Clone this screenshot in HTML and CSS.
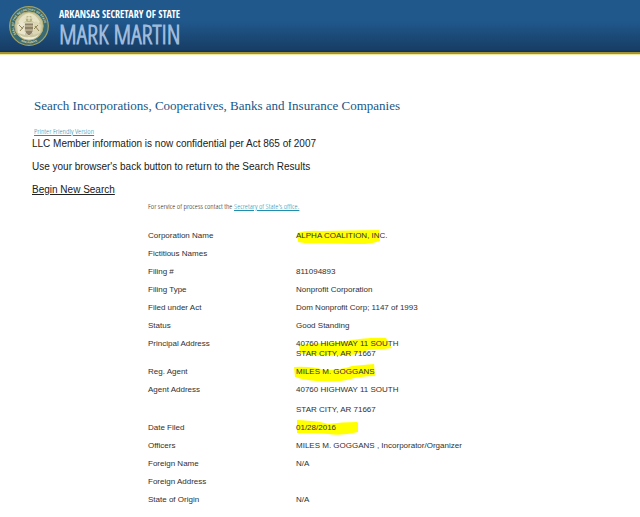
FILE: index.html
```html
<!DOCTYPE html>
<html lang="en">
<head>
<meta charset="utf-8">
<meta name="viewport" content="width=device-width, initial-scale=1">
<title>Arkansas Secretary of State</title>
<link rel="stylesheet" href="styles.css">
</head>
<body>
<header class="banner">
  <svg class="seal" viewBox="0 0 40 40" aria-hidden="true">
    <defs>
      <path id="ring-top" d="M7.3 28.5A15.3 15.3 0 1 1 32.7 28.5"/>
      <path id="ring-bottom" d="M8 32.6A17.4 17.4 0 0 0 32 32.6"/>
    </defs>
    <circle cx="20" cy="20" r="19.3" fill="#3b6b72" stroke="#a3a263" stroke-width="1.2"/>
    <circle cx="20" cy="20" r="14.2" fill="#c9c6a0" stroke="#b5ae72"/>
    <path d="M9 16Q13 8 20 7Q27 8 31 16L28 18L20 13L12 18Z" fill="#e6e2c4"/>
    <path d="M8 19L13 15L16 18V29L9 27Z" fill="#e9e5cf"/>
    <path d="M32 19L27 15L24 18V29L31 27Z" fill="#dcd6b4"/>
    <path d="M10 19L14 23M11 25L15 20M29 19L25 23M30 25L26 20" stroke="#8f8455" stroke-width="1" fill="none"/>
    <circle cx="20" cy="13" r="3.2" fill="#b7b27f"/>
    <path d="M20 9V15M17 12H23" stroke="#f1eed8" stroke-width="1"/>
    <path d="M15.5 17H24.5V24Q24 28 20 30Q16 28 15.5 24Z" fill="#8d8068" stroke="#eee9cf" stroke-width=".8"/>
    <path d="M16 20H24M16 24H24" stroke="#d9cfa6" stroke-width="1"/>
    <path d="M10 28Q14 32 20 31Q26 32 30 28L28 31Q20 36 12 31Z" fill="#efebd7"/>
    <text class="seal-text"><textPath href="#ring-top">SEAL OF THE SECRETARY OF STATE</textPath></text>
    <text class="seal-text"><textPath href="#ring-bottom" startOffset="50%" text-anchor="middle">ARKANSAS</textPath></text>
  </svg>
  <div class="brand">
    <span class="office">ARKANSAS SECRETARY OF STATE</span>
    <span class="holder">MARK MARTIN</span>
  </div>
</header>
<main class="page">
  <h1 class="title">Search Incorporations, Cooperatives, Banks and Insurance Companies</h1>
  <a class="fine-link printer" href="#">Printer Friendly Version</a>
  <div class="notes">
    <p>LLC Member information is now confidential per Act 865 of 2007</p>
    <p>Use your browser's back button to return to the Search Results</p>
    <p><a class="new-search" href="#">Begin New Search</a></p>
  </div>
  <section class="record">
    <p class="service">For service of process contact the <a class="fine-link" href="#">Secretary of State's office.</a></p>
    <table class="details">
      <tbody>
        <tr><th scope="row">Corporation Name</th><td><svg class="marker" viewBox="0 0 110 24" aria-hidden="true"><path d="M5 6Q15 3 28 4L87 3L88 14Q82 16 74 17Q45 17 28 16Q15 17 6 15Z"/></svg>ALPHA COALITION, INC.</td></tr>
        <tr><th scope="row">Fictitious Names</th><td></td></tr>
        <tr><th scope="row">Filing #</th><td>811094893</td></tr>
        <tr><th scope="row">Filing Type</th><td>Nonprofit Corporation</td></tr>
        <tr><th scope="row">Filed under Act</th><td>Dom Nonprofit Corp; 1147 of 1993</td></tr>
        <tr><th scope="row">Status</th><td>Good Standing</td></tr>
        <tr><th scope="row">Principal Address</th><td><svg class="marker" viewBox="0 0 110 24" aria-hidden="true"><path d="M7 10Q25 8 50 7Q75 2 94 3L100 13Q88 15 76 15Q68 19 58 20H20L8 18Z"/></svg>40760 HIGHWAY 11 SOUTH<br>STAR CITY, AR 71667</td></tr>
        <tr><th scope="row">Reg. Agent</th><td><svg class="marker" viewBox="0 0 110 24" aria-hidden="true"><path d="M2 4Q20 3 32 7Q50 7 60 3L82 1L83 13Q68 13 55 17Q42 20 25 18Q12 17 3 14Z"/></svg>MILES M. GOGGANS</td></tr>
        <tr><th scope="row">Agent Address</th><td>40760 HIGHWAY 11 SOUTH<br><br>STAR CITY, AR 71667</td></tr>
        <tr><th scope="row">Date Filed</th><td><svg class="marker" viewBox="0 0 110 24" aria-hidden="true"><path d="M5 1Q28 2 36 5Q50 3 65 3L66 4V13Q50 17 36 15Q24 14 5 14Z"/></svg>01/28/2016</td></tr>
        <tr><th scope="row">Officers</th><td>MILES M. GOGGANS , Incorporator/Organizer</td></tr>
        <tr><th scope="row">Foreign Name</th><td>N/A</td></tr>
        <tr><th scope="row">Foreign Address</th><td></td></tr>
        <tr><th scope="row">State of Origin</th><td>N/A</td></tr>
      </tbody>
    </table>
  </section>
</main>
</body>
</html>
```
FILE: styles.css
```css
body {
  margin: 0;
  background: #fff;
  color: #303030;
  font-family: "Liberation Sans", Arial, sans-serif;
}

.banner {
  display: flex;
  align-items: center;
  gap: 10px;
  padding: 6px 9px;
  background: linear-gradient(#20588c 0, #20588c 40%, #173d65 96%, #0d3155 100%);
  border-bottom: 2px solid #a4922f;
  box-shadow: 0 1px #efe8a0;
}

.seal {
  width: 40px;
  height: 40px;
}

.seal-text {
  fill: #d9dcae;
  font-size: 3px;
  font-weight: bold;
}

.brand {
  display: flex;
  flex-direction: column;
  white-space: nowrap;
}

.office {
  color: #fff;
  font: bold 10px/16px "Open Sans Condensed", "Roboto Condensed", sans-serif;
}

.holder {
  color: #9fbbdc;
  font: bold 26px/24px "Open Sans Condensed Light", "Roboto Condensed", sans-serif;
}

.page {
  padding: 44px 32px 8px;
}

.title {
  margin: 0 0 11px 2px;
  color: #165789;
  font: 13px/16px "Liberation Serif", "Times New Roman", serif;
}

.fine-link {
  color: #1f8fb0;
}

.printer,
.service {
  font: 300 8px/12px "Open Sans Condensed Light", "Roboto Condensed", sans-serif;
}

.printer {
  display: block;
  margin-left: 2px;
}

.notes {
  padding-top: 1px;
}

.notes p {
  margin: 0 0 11px;
  color: #202020;
  font-size: 10px;
  line-height: 12px;
}

.notes p:last-child {
  margin-bottom: 4px;
}

.new-search {
  color: inherit;
}

.record {
  margin-left: 116px;
}

.service {
  margin: 0 0 15px;
  color: #222;
}

.details {
  width: 100%;
  border-spacing: 0;
  table-layout: fixed;
  font-size: 8px;
  line-height: 10px;
}

.details th,
.details td {
  padding: 4px 0;
  font-weight: normal;
  text-align: left;
  vertical-align: top;
}

.details th {
  width: 148px;
}

.details td {
  position: relative;
}

.marker {
  position: absolute;
  z-index: -1;
  top: 0;
  left: -4px;
  width: 110px;
  height: 24px;
  fill: #ff0;
}
```
